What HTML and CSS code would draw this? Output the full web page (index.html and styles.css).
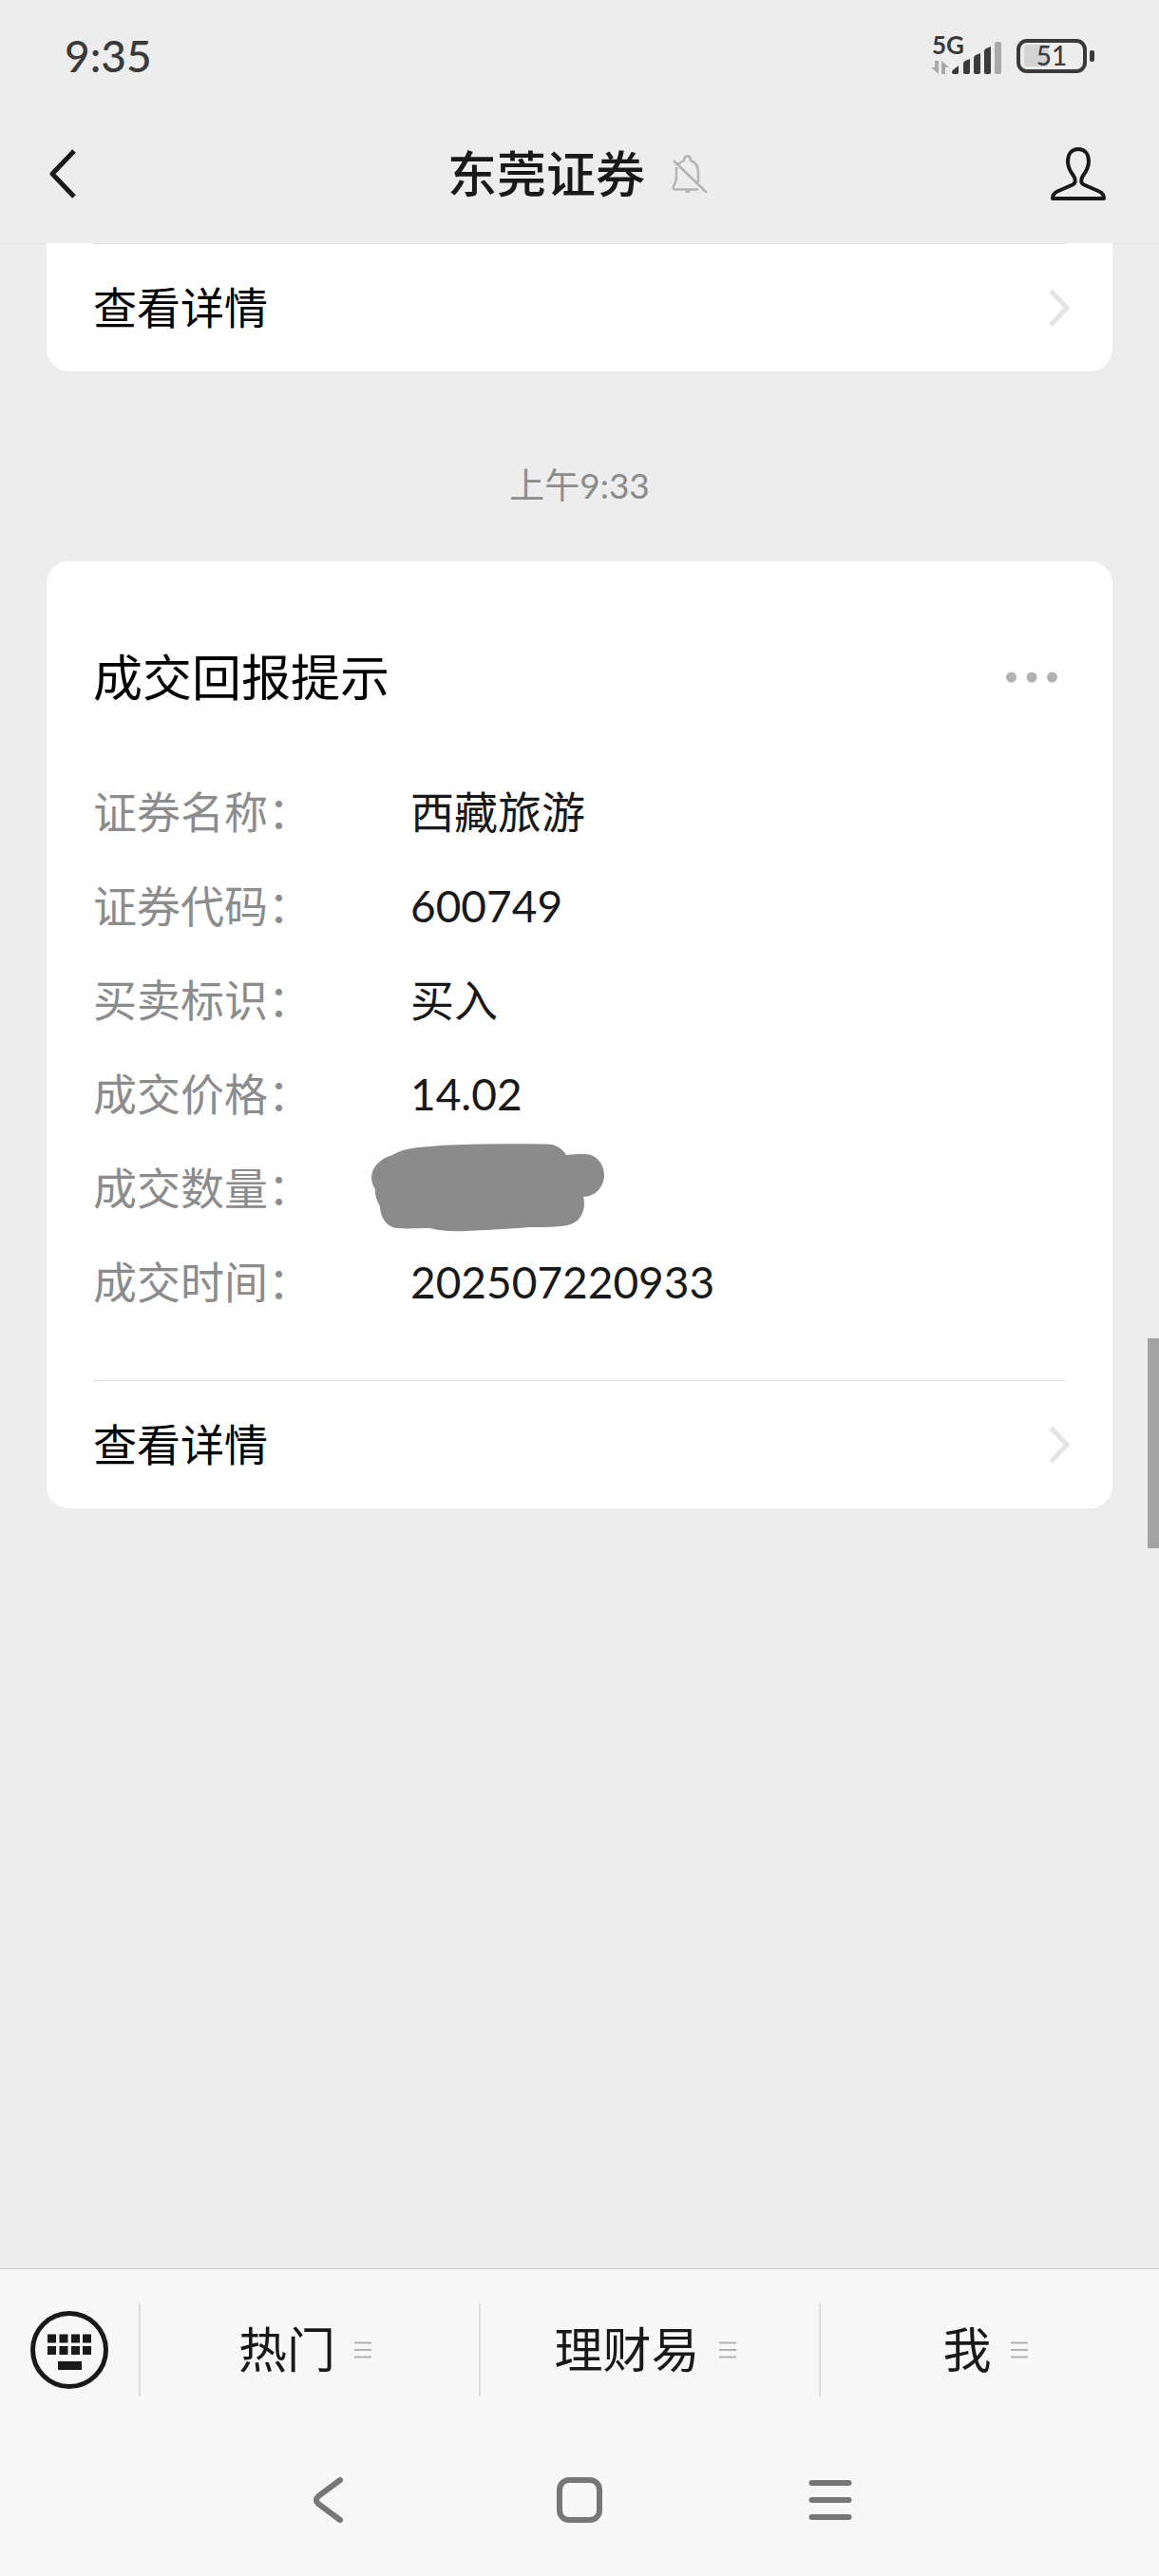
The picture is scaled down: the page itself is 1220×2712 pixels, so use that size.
FILE: index.html
```html
<!DOCTYPE html>
<html lang="zh-CN">
  <head>
    <meta charset="UTF-8" />
    <meta name="viewport" content="width=device-width, initial-scale=1.0" />
    <title>东莞证券</title>
    <link rel="stylesheet" href="styles.css">
  </head>
  <body>
    <header class="header">
      <div class="status">
        <span class="clock">9:35</span>
        <div class="status-icons">
          <svg width="76" height="62" viewBox="-2 -10 76 62">
            <text class="network" x="1" y="19">5G</text>
            <g fill="#a9a9a9">
              <path d="M4 26h4v14L0 33h4z" />
              <path d="M11 40V26l8 7h-4v7z" />
              <rect x="67" y="6" width="7" height="34" rx="2" />
            </g>
            <g fill="#3a3a3a">
              <path d="M22 38q0-2 2-3l5-4v7q0 2-2 2h-3q-2 0-2-2z" />
              <path d="M34 29q0-2 2-3l5-2v14q0 2-2 2h-3q-2 0-2-2z" />
              <path d="M45 23q0-2 2-3l5-2v20q0 2-2 2h-3q-2 0-2-2z" />
              <path d="M56 16q0-2 2-3l5-2v27q0 2-2 2h-3q-2 0-2-2z" />
            </g>
          </svg>
          <svg width="82" height="36" viewBox="0 0 82 36">
            <rect x="8" y="6" width="26" height="23" rx="4" fill="#d3d3d3" />
            <rect x="2" y="2" width="70" height="32" rx="9" fill="none" stroke="#3a3a3a" stroke-width="4" />
            <rect x="77" y="12" width="5" height="12" rx="2" fill="#3a3a3a" />
            <text class="battery" x="37" y="28">51</text>
          </svg>
        </div>
      </div>
      <div class="title-bar">
        <button class="icon-button" aria-label="返回">
          <svg width="28" height="52" viewBox="0 0 28 52">
            <path d="M26 2L3 26l23 24" fill="none" stroke="#191919" stroke-width="5" stroke-linejoin="round" />
          </svg>
        </button>
        <div class="title">
          <h1>东莞证券</h1>
          <svg width="38" height="40" viewBox="0 0 38 40" fill="none" stroke="#b4b4b4" stroke-width="2.5">
            <path d="M7 9.500Q11 7 13 6Q13 1.500 16.500 1.500T20 6Q28 9 28 18v11M5 13V23q0 6-3 10-1 3 1 3.500h25" />
            <path d="M2 6l35 34" />
            <path d="M15 38q2 2 4 0" />
          </svg>
        </div>
        <button class="icon-button profile" aria-label="公众号主页">
          <svg width="58" height="56" viewBox="0 0 58 56">
            <path d="M29 2C21.500 2 18 8 18 15c0 7 3 11 6 15 3 4 2 8-1 9.500L7 46.500Q2 49 2 54h54q0-5-5-7.500L35 39.500C32 38 31 34 34 30c3-4 6-8 6-15C40 8 36.500 2 29 2z" fill="none" stroke="#191919" stroke-width="4" stroke-linejoin="round" />
          </svg>
        </button>
      </div>
    </header>

    <main class="chat">
      <section class="card card-cut">
        <a class="detail" href="#">
          <span>查看详情</span>
          <svg width="22" height="40" viewBox="0 0 22 40">
            <path d="M2 2l17 18L2 38" fill="none" stroke="#e5e5e5" stroke-width="5" />
          </svg>
        </a>
      </section>

      <p class="time">上午9:33</p>

      <section class="card">
        <div class="card-head">
          <h2>成交回报提示</h2>
          <button class="icon-button more" aria-label="更多">
            <svg width="54" height="12" viewBox="0 0 54 12" fill="#b2b2b2">
              <circle cx="5.500" cy="6" r="5.500" />
              <circle cx="27" cy="6" r="5.500" />
              <circle cx="48.500" cy="6" r="5.500" />
            </svg>
          </button>
        </div>
        <dl class="fields">
          <dt>证券名称：</dt>
          <dd>西藏旅游</dd>
          <dt>证券代码：</dt>
          <dd>600749</dd>
          <dt>买卖标识：</dt>
          <dd>买入</dd>
          <dt>成交价格：</dt>
          <dd>14.02</dd>
          <dt>成交数量：</dt>
          <dd>
            <svg class="mask" width="246" height="93" viewBox="0 0 246 93">
              <path d="M0 36C0 26 8 16 22 12C32 6 44 4 61 3C80 1 100 1 119 0.500C140 0 160 0 182 0.500C194 0 201 5 205 12C212 11 218 11 225 11C237 11 245 22 245 33C245 45 236 56 223 56Q224 60 224 63C224 75 217 84 206 86C194 88 182 88 167 88C144 90 122 91 99 92Q78 93 61 89C50 89 38 90 27 89C16 88 9 77 9 66Q3 56 4 48Q0 42 0 36z" fill="#8b8b8b" />
            </svg>
          </dd>
          <dt>成交时间：</dt>
          <dd>202507220933</dd>
        </dl>
        <a class="detail" href="#">
          <span>查看详情</span>
          <svg width="22" height="40" viewBox="0 0 22 40">
            <path d="M2 2l17 18L2 38" fill="none" stroke="#e5e5e5" stroke-width="5" />
          </svg>
        </a>
      </section>
      <div class="scroll-thumb"></div>
    </main>

    <footer class="footer">
      <div class="menu">
        <button class="keyboard" aria-label="切换键盘">
          <svg width="82" height="82" viewBox="0 0 82 82" fill="#191919">
            <circle cx="41" cy="41" r="38.500" fill="none" stroke="#191919" stroke-width="5" />
            <path d="M18 24.500h9v9h-9zM30.500 24.500h9v9h-9zM43 24.500h9v9h-9zM55 24.500h9v9h-9z" />
            <path d="M18 37h9v9h-9zM30.500 37h9v9h-9zM43 37h9v9h-9zM55 37h9v9h-9z" />
            <path d="M29 53h25v9H29z" />
          </svg>
        </button>
        <button class="tab">
          <span>热门</span>
          <svg width="18" height="18" viewBox="0 0 18 18">
            <path d="M0 1.500h18M0 9h18M0 16.500h18" stroke="#b2b2b2" stroke-width="2" />
          </svg>
        </button>
        <button class="tab">
          <span>理财易</span>
          <svg width="18" height="18" viewBox="0 0 18 18">
            <path d="M0 1.500h18M0 9h18M0 16.500h18" stroke="#b2b2b2" stroke-width="2" />
          </svg>
        </button>
        <button class="tab">
          <span>我</span>
          <svg width="18" height="18" viewBox="0 0 18 18">
            <path d="M0 1.500h18M0 9h18M0 16.500h18" stroke="#b2b2b2" stroke-width="2" />
          </svg>
        </button>
      </div>
      <nav class="system-nav">
        <button aria-label="返回">
          <svg width="48" height="48" viewBox="0 0 48 48">
            <path d="M36 3L13 20q-4 4 0 8l23 17" fill="none" stroke="#777" stroke-width="6" stroke-linecap="round" />
          </svg>
        </button>
        <button aria-label="主屏幕">
          <svg width="48" height="48" viewBox="0 0 48 48">
            <rect x="3" y="3" width="42" height="42" rx="10" fill="none" stroke="#777" stroke-width="6" />
          </svg>
        </button>
        <button aria-label="最近任务">
          <svg width="48" height="48" viewBox="0 0 48 48">
            <path d="M4.500 6h39M4.500 24h39M4.500 42h39" stroke="#777" stroke-width="6" stroke-linecap="round" />
          </svg>
        </button>
      </nav>
    </footer>
  </body>
</html>
```

FILE: styles.css
```css
* {
  box-sizing: border-box;
}
body {
  margin: 0;
  min-height: 100vh;
  display: flex;
  flex-direction: column;
  background-color: #ededed;
  color: #191919;
  font-family: Lato, "Noto Sans CJK SC", sans-serif;
  font-size: 46px;
  line-height: 60px;
}
svg {
  display: block;
  flex-shrink: 0;
}
h1,
h2,
p,
dl,
dd {
  margin: 0;
}
button {
  padding: 0;
  border: none;
  background: none;
  color: inherit;
  font: inherit;
  cursor: pointer;
}

/* header */
.header {
  position: relative;
}
.header::after {
  content: "";
  position: absolute;
  top: 100%;
  left: 0;
  right: 0;
  height: 1px;
  background-color: rgba(0, 0, 0, 0.04);
}
.status {
  height: 110px;
  padding: 8px 68px 0;
  display: flex;
  justify-content: space-between;
  align-items: center;
}
.clock {
  color: #3a3a3a;
  font-weight: 500;
}
.status-icons {
  display: flex;
  align-items: center;
  gap: 16px;
}
.network {
  font-size: 26px;
  font-weight: 700;
  fill: #3a3a3a;
}
.battery {
  font-size: 28px;
  font-weight: 500;
  text-anchor: middle;
  fill: #3a3a3a;
}
.title-bar {
  height: 146px;
  padding: 0 56px 0 52px;
  display: grid;
  grid-template-columns: 1fr auto 1fr;
  align-items: center;
}
.title {
  display: flex;
  align-items: center;
  gap: 28px;
}
.title h1 {
  font-size: 52px;
  font-weight: 500;
}
.icon-button {
  justify-self: start;
}
.icon-button.profile {
  justify-self: end;
}

/* messages */
.chat {
  position: relative;
  flex: 1;
  padding: 0 49px;
}
.card {
  padding: 0 49px;
  border-radius: 24px;
  background-color: #fff;
}
.card-cut {
  border-radius: 0 0 24px 24px;
}
.detail {
  height: 135px;
  display: flex;
  justify-content: space-between;
  align-items: center;
  border-top: 1px solid #e0e0e0;
  color: #000;
  text-decoration: none;
}
.detail svg {
  margin-right: -4px;
}
.time {
  padding-top: 40px;
  line-height: 160px;
  text-align: center;
  font-size: 37px;
  color: #8c8c8c;
}
.card-head {
  padding: 82px 9px 52px 0;
  display: flex;
  justify-content: space-between;
  align-items: center;
}
.card-head h2 {
  font-size: 52px;
  line-height: 80px;
  font-weight: 400;
  color: #000;
}
.fields {
  padding-bottom: 54px;
  display: grid;
  grid-template-columns: 334px 1fr;
  line-height: 99px;
}
.fields dt {
  color: #8c8c8c;
}
.fields dd {
  position: relative;
}
.mask {
  position: absolute;
  top: 3px;
  left: -41px;
}
.scroll-thumb {
  position: absolute;
  top: 1153px;
  right: 0;
  width: 12px;
  height: 221px;
  background-color: #a3a3a3;
}

/* bottom menu */
.footer {
  border-top: 1px solid #c8c8c8;
  background-color: #f7f7f7;
}
.menu {
  height: 170px;
  display: flex;
  align-items: center;
}
.keyboard {
  width: 146px;
  display: flex;
  justify-content: center;
}
.tab {
  flex: 1;
  height: 98px;
  padding-right: 10px;
  display: flex;
  justify-content: center;
  align-items: center;
  gap: 20px;
  border-left: 2px solid #dedede;
  font-size: 51px;
}
.system-nav {
  height: 153px;
  padding-bottom: 8px;
  display: flex;
  justify-content: center;
  align-items: center;
}
.system-nav button {
  width: 264px;
  display: flex;
  justify-content: center;
}
```
